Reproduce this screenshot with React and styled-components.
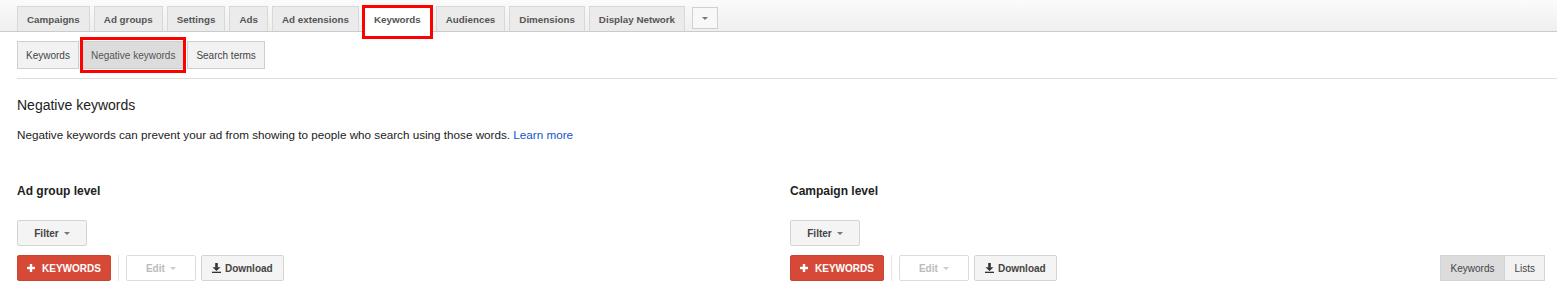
import React from "react";
import styled, { createGlobalStyle, css } from "styled-components";

const GlobalStyle = createGlobalStyle`
  body {
    margin: 0;
    background: #fff;
    font-family: "Liberation Sans", Arial, sans-serif;
    color: #222;
  }
`;

const Page = styled.div`
  width: 1557px;
  height: 284px;
  overflow: hidden;
`;

const TabBar = styled.div`
  display: flex;
  align-items: flex-end;
  gap: 4px;
  height: 31px;
  padding-left: 17px;
  background: linear-gradient(to bottom, #fbfbfb, #efefef);
  border-bottom: 1px solid #cbcbcb;
`;

const Tab = styled.div`
  position: relative;
  display: flex;
  align-items: center;
  height: 24px;
  padding: 0 9px;
  background: #ebebeb;
  border: 1px solid #d8d8d8;
  border-bottom: none;
  font-size: 9.8px;
  font-weight: bold;
  color: #555;
  white-space: nowrap;

  ${(p) =>
    p.$active &&
    css`
      background: #fff;
      height: 25px;
      margin-bottom: -1px;
      padding: 0 10px;
      border-color: #ccc;

      &::after {
        content: "";
        position: absolute;
        top: -2px;
        left: -2px;
        right: -2px;
        bottom: -7px;
        border: 3px solid #f00;
      }
    `}
`;

const MoreTab = styled.div`
  display: flex;
  align-items: center;
  justify-content: center;
  width: 24px;
  height: 20px;
  margin: 0 0 2px 3px;
  background: #f8f8f8;
  border: 1px solid #d0d0d0;
`;

const Caret = styled.span`
  display: inline-block;
  width: 0;
  height: 0;
  border-left: 3px solid transparent;
  border-right: 3px solid transparent;
  border-top: 3px solid ${(p) => p.$color || "#777"};
`;

const SubNav = styled.div`
  display: flex;
  margin-left: 17px;
  padding: 9px 0;
  border-bottom: 1px solid #dedede;
`;

const SubTab = styled.div`
  position: relative;
  display: flex;
  align-items: center;
  height: 26px;
  padding: 0 8px;
  background: ${(p) => (p.$active ? "#dcdcdc" : "#f2f2f2")};
  border: 1px solid #cfcfcf;
  font-size: 10px;
  color: ${(p) => (p.$active ? "#555" : "#444")};
  white-space: nowrap;

  ${(p) =>
    p.$active &&
    css`
      margin: 0 3px;
      &::after {
        content: "";
        position: absolute;
        top: -5px;
        left: -3px;
        right: -3px;
        bottom: -5px;
        border: 3px solid #f00;
      }
    `}
`;

const Content = styled.div`
  padding: 0 12px 0 17px;
`;

const Title = styled.h2`
  margin: 18px 0 0;
  font-size: 14px;
  line-height: 17px;
  font-weight: normal;
  color: #222;
`;

const Description = styled.p`
  margin: 13px 0 0;
  font-size: 11.7px;
  line-height: 15px;
  color: #222;
`;

const Link = styled.a`
  color: #15c;
  text-decoration: none;
`;

const Levels = styled.div`
  display: grid;
  grid-template-columns: 773px 1fr;
  margin-top: 41px;
`;

const Level = styled.section`
  display: flex;
  flex-direction: column;
  align-items: flex-start;
`;

const LevelTitle = styled.h3`
  margin: 0;
  font-size: 12px;
  line-height: 16px;
  font-weight: bold;
  color: #222;
`;

const FilterRow = styled.div`
  margin-top: 21px;
`;

const ActionRow = styled.div`
  display: flex;
  align-items: center;
  align-self: stretch;
  margin-top: 9px;
`;

const Button = styled.button`
  display: inline-flex;
  align-items: center;
  justify-content: center;
  gap: ${(p) => p.$gap || 5}px;
  height: 26px;
  min-width: 70px;
  padding: 0 ${(p) => p.$pad || 10}px;
  margin-right: ${(p) => p.$mr || 0}px;
  font-family: inherit;
  font-size: 10px;
  font-weight: bold;
  color: #444;
  background: #f4f4f4;
  border: 1px solid #d4d4d4;
  border-radius: 2px;
  box-sizing: border-box;
  cursor: default;

  ${(p) =>
    p.$variant === "red" &&
    css`
      color: #fff;
      background: #d64937;
      border-color: #cb4431;
    `}

  ${(p) =>
    p.$variant === "disabled" &&
    css`
      color: #bbb;
      background: #fff;
      border-color: #dcdcdc;
    `}
`;

const Divider = styled.span`
  width: 1px;
  height: 26px;
  margin: 0 7px 0 7px;
  background: #e6e6e6;
`;

const Toggle = styled.div`
  display: flex;
  margin-left: auto;
`;

const ToggleItem = styled.div`
  display: flex;
  align-items: center;
  height: 24px;
  padding: 0 ${(p) => p.$pad}px;
  font-size: 10px;
  color: #444;
  background: ${(p) => (p.$active ? "#dcdcdc" : "#f2f2f2")};
  border: 1px solid #d4d4d4;

  & + & {
    border-left: none;
  }
`;

const PlusIcon = () => (
  <svg width="8" height="8" viewBox="0 0 8 8">
    <rect x="2.8" y="0" width="2.4" height="8" fill="#fff" />
    <rect x="0" y="2.8" width="8" height="2.4" fill="#fff" />
  </svg>
);

const DownloadIcon = () => (
  <svg width="9" height="10" viewBox="0 0 9 10">
    <rect x="3.2" y="0" width="2.6" height="4.5" fill="#333" />
    <polygon points="0.5,4.2 8.5,4.2 4.5,8" fill="#333" />
    <rect x="0" y="8.7" width="9" height="1.3" fill="#333" />
  </svg>
);

const tabs = [
  "Campaigns",
  "Ad groups",
  "Settings",
  "Ads",
  "Ad extensions",
  "Keywords",
  "Audiences",
  "Dimensions",
  "Display Network",
];

const subTabs = ["Keywords", "Negative keywords", "Search terms"];

const LevelPanel = ({ title, withToggle }) => (
  <Level>
    <LevelTitle>{title}</LevelTitle>
    <FilterRow>
      <Button>
        Filter <Caret />
      </Button>
    </FilterRow>
    <ActionRow>
      <Button $variant="red" $gap={7} $pad={9}>
        <PlusIcon />
        KEYWORDS
      </Button>
      <Divider />
      <Button $variant="disabled" $mr={5}>
        Edit <Caret $color="#ccc" />
      </Button>
      <Button $gap={4} $pad={10}>
        <DownloadIcon />
        Download
      </Button>
      {withToggle && (
        <Toggle>
          <ToggleItem $active $pad={10}>
            Keywords
          </ToggleItem>
          <ToggleItem $pad={9}>Lists</ToggleItem>
        </Toggle>
      )}
    </ActionRow>
  </Level>
);

const App = () => (
  <Page>
    <GlobalStyle />
    <TabBar>
      {tabs.map((t) => (
        <Tab key={t} $active={t === "Keywords"}>
          {t}
        </Tab>
      ))}
      <MoreTab>
        <Caret />
      </MoreTab>
    </TabBar>

    <SubNav>
      {subTabs.map((t) => (
        <SubTab key={t} $active={t === "Negative keywords"}>
          {t}
        </SubTab>
      ))}
    </SubNav>

    <Content>
      <Title>Negative keywords</Title>
      <Description>
        Negative keywords can prevent your ad from showing to people who search
        using those words. <Link href="#">Learn more</Link>
      </Description>

      <Levels>
        <LevelPanel title="Ad group level" />
        <LevelPanel title="Campaign level" withToggle />
      </Levels>
    </Content>
  </Page>
);

export default App;
